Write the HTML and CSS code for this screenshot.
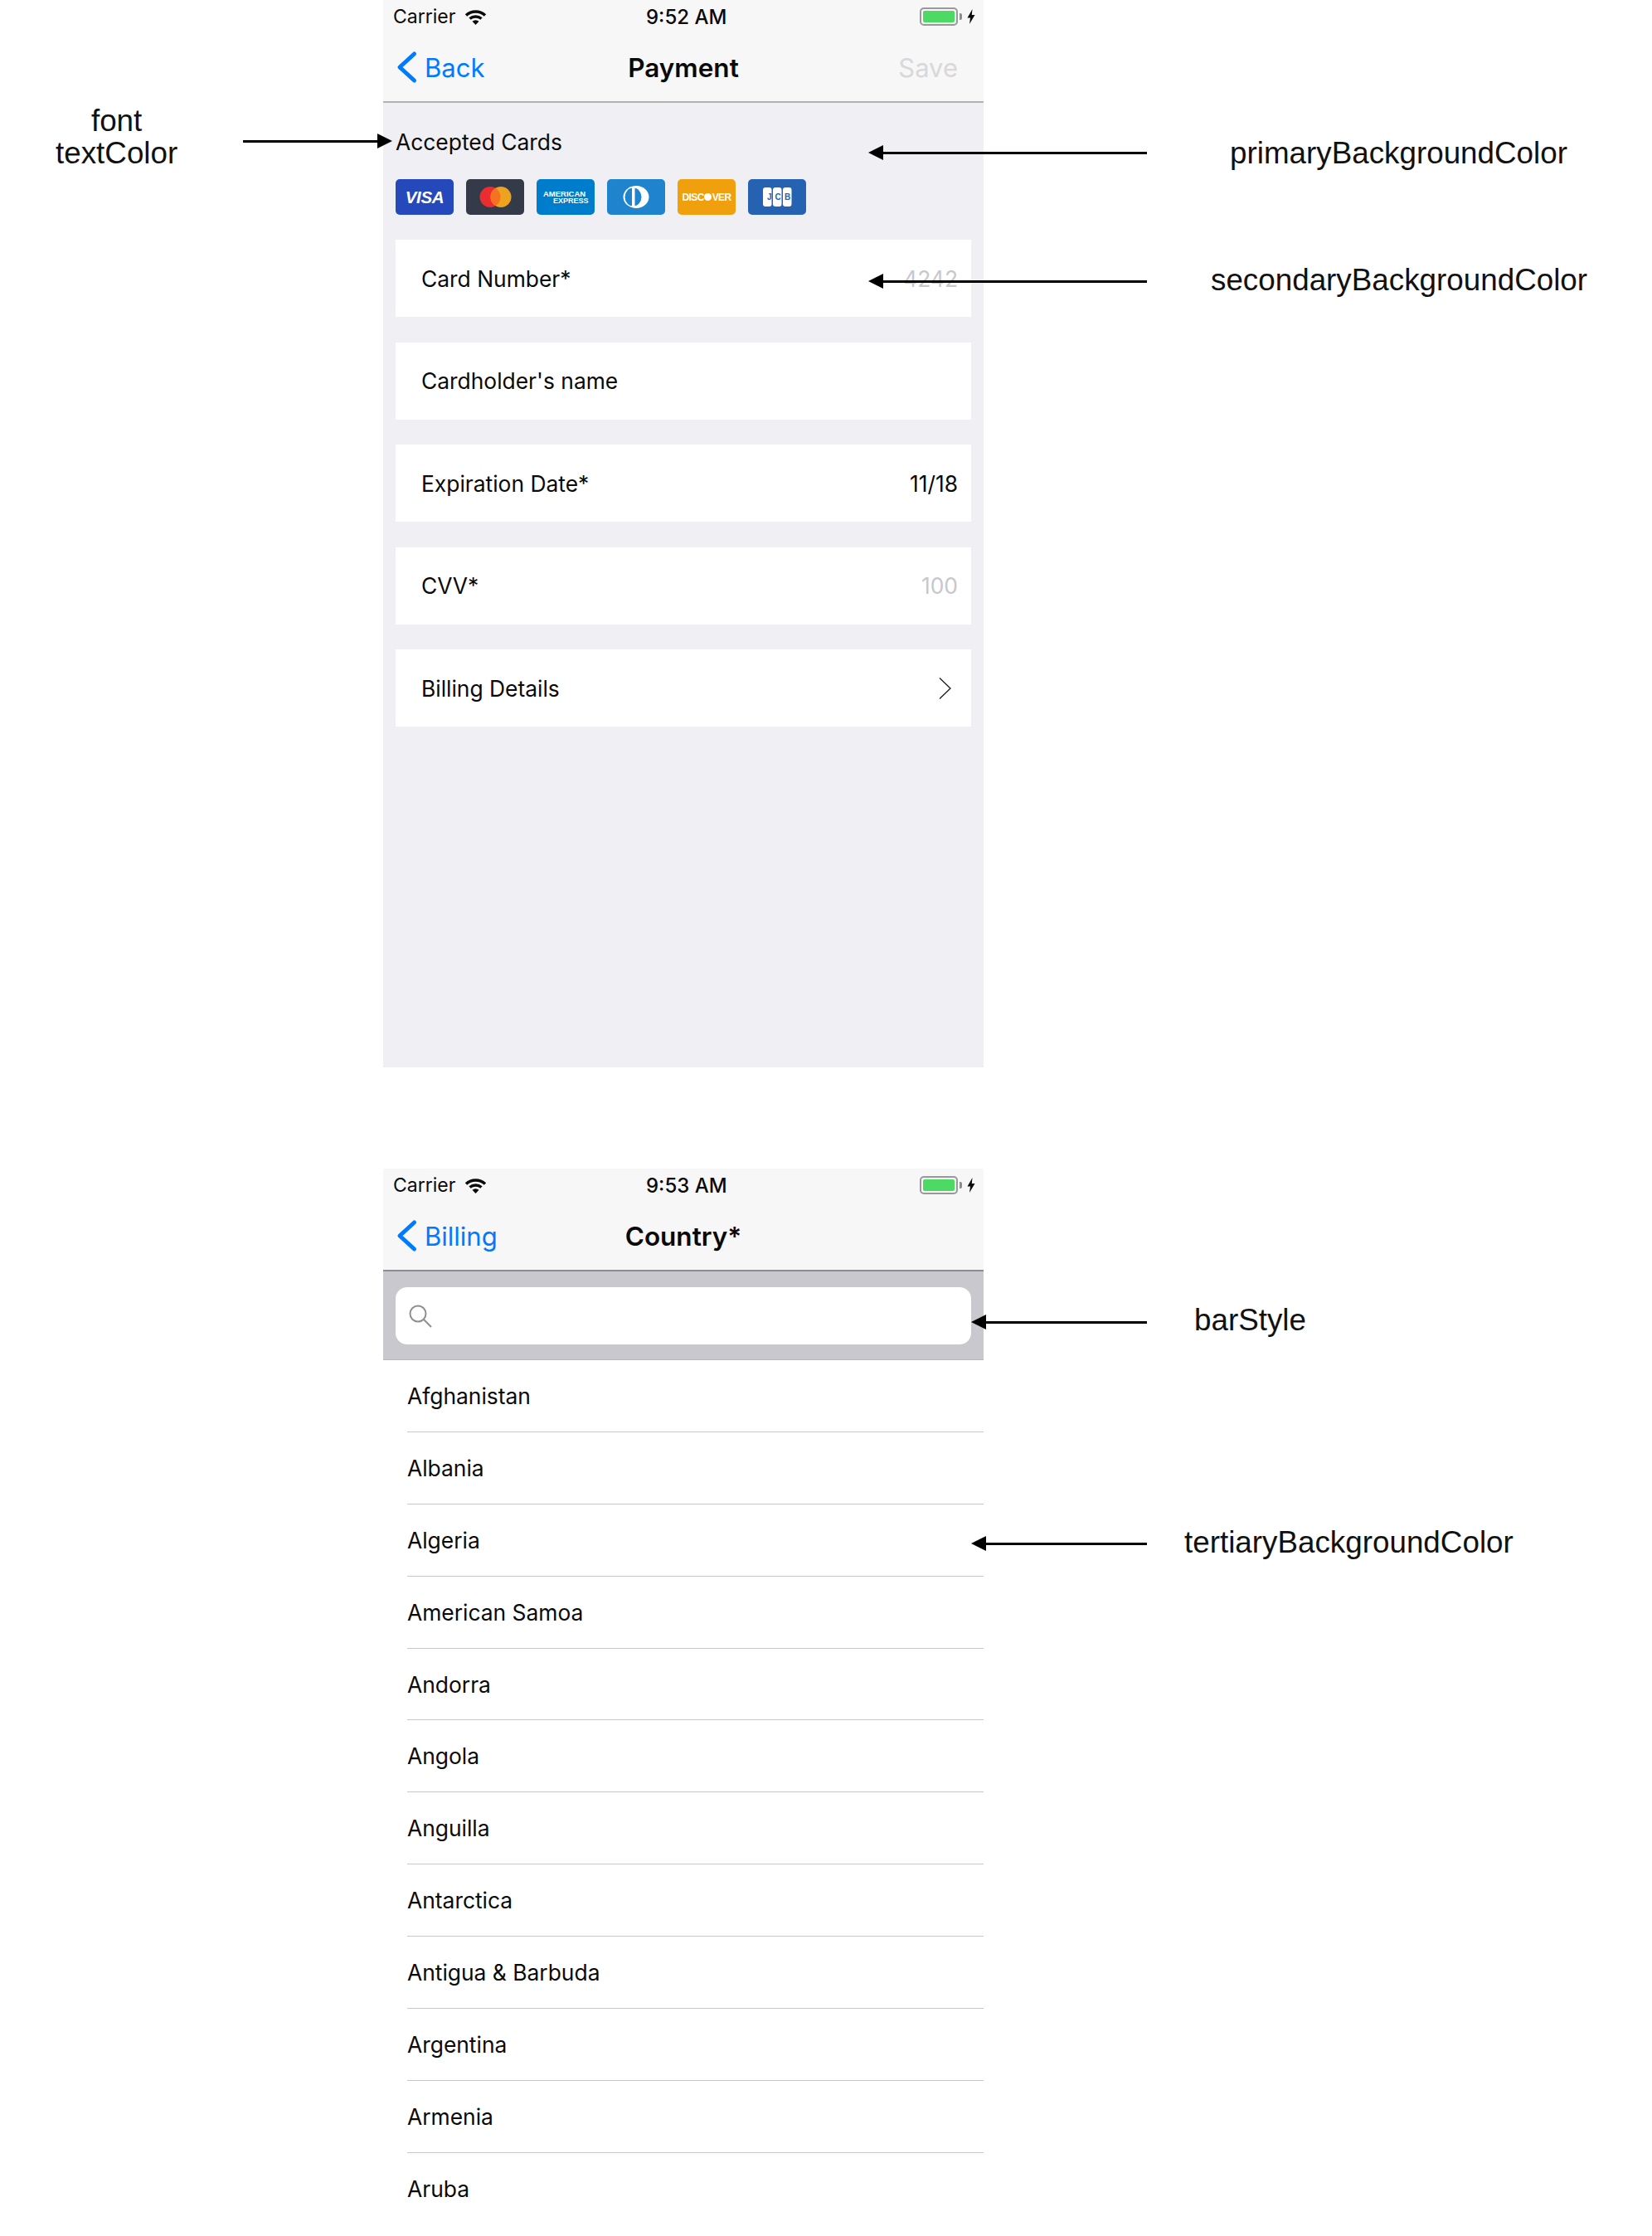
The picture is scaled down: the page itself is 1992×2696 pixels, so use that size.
FILE: index.html
```html
<!DOCTYPE html>
<html lang="en">
<head>
    <meta charset="UTF-8">
    <meta name="viewport" content="width=device-width, initial-scale=1.0">
    <title>Theme settings</title>
    <link rel="stylesheet" href="styles.css">
</head>
<body>
    <div class="page">
        <section class="phone phone-payment">
            <div class="status-bar">
                <div class="status-left">
                    <span>Carrier</span>
                    <svg class="wifi" viewBox="0 0 27 19"><path d="M2 7.500A17 17 0 0 1 25 7.500"/><path d="M6.500 11.500A11 11 0 0 1 20.500 11.500"/><path class="wifi-dot" d="M13.500 19L9.500 14.800A6 6 0 0 1 17.500 14.800Z"/></svg>
                </div>
                <span class="status-time">9:52 AM</span>
                <div class="status-right">
                    <div class="battery"><div class="battery-fill"></div></div>
                    <div class="battery-tip"></div>
                    <svg class="bolt" viewBox="0 0 10 18"><path d="M6.500 0L0.500 10.500H4L3 18L9.500 7H5.800Z"/></svg>
                </div>
            </div>
            <div class="nav-bar">
                <div class="nav-back">
                    <svg class="back-chevron" viewBox="0 0 26 42"><path d="M21.500 5L4 21L21.500 37"/></svg>
                    <span>Back</span>
                </div>
                <span class="nav-title">Payment</span>
                <span class="nav-action">Save</span>
            </div>
            <div class="payment-body">
                <div class="accepted-label">Accepted Cards</div>
                <div class="card-row">
                    <div class="card card-visa"><span>VISA</span></div>
                    <div class="card card-master">
                        <svg viewBox="0 0 70 43"><circle cx="29" cy="21.500" r="12.500" fill="#eb2d30"/><circle cx="42" cy="21.500" r="12.500" fill="#eca420"/><path d="M35.500 10.820a12.500 12.500 0 0 1 0 21.360a12.500 12.500 0 0 1 0-21.360Z" fill="#f57320"/></svg>
                    </div>
                    <div class="card card-amex"><span class="amex-top">AMERICAN</span><span class="amex-bottom">EXPRESS</span></div>
                    <div class="card card-diners">
                        <svg viewBox="0 0 70 43"><ellipse cx="35" cy="21.500" rx="15.500" ry="13.500" fill="#fff"/><ellipse cx="31.500" cy="21.500" rx="10" ry="11" fill="#2083cd"/><rect x="30" y="10" width="3.500" height="23" fill="#fff"/></svg>
                    </div>
                    <div class="card card-discover"><span>DISC<i class="discover-dot"></i>VER</span></div>
                    <div class="card card-jcb">
                        <svg viewBox="0 0 70 43"><rect x="18" y="10" width="10.500" height="23" rx="3" fill="#fff"/><rect x="30" y="10" width="10.500" height="23" rx="3" fill="#fff"/><rect x="42" y="10" width="10.500" height="23" rx="3" fill="#fff"/><text class="jcb-letters" x="23" y="25">J</text><text class="jcb-letters" x="32.500" y="25">C</text><text class="jcb-letters" x="44" y="25">B</text></svg>
                    </div>
                </div>
                <div class="form-list">
                    <div class="form-row"><span>Card Number*</span><span class="form-placeholder">4242</span></div>
                    <div class="form-row"><span>Cardholder's name</span></div>
                    <div class="form-row"><span>Expiration Date*</span><span>11/18</span></div>
                    <div class="form-row"><span>CVV*</span><span class="form-placeholder">100</span></div>
                    <div class="form-row"><span>Billing Details</span><svg class="disclosure" viewBox="0 0 15 26"><path d="M1 0.500L14 13L1 25.500"/></svg></div>
                </div>
            </div>
        </section>

        <section class="phone phone-country">
            <div class="status-bar">
                <div class="status-left">
                    <span>Carrier</span>
                    <svg class="wifi" viewBox="0 0 27 19"><path d="M2 7.500A17 17 0 0 1 25 7.500"/><path d="M6.500 11.500A11 11 0 0 1 20.500 11.500"/><path class="wifi-dot" d="M13.500 19L9.500 14.800A6 6 0 0 1 17.500 14.800Z"/></svg>
                </div>
                <span class="status-time">9:53 AM</span>
                <div class="status-right">
                    <div class="battery"><div class="battery-fill"></div></div>
                    <div class="battery-tip"></div>
                    <svg class="bolt" viewBox="0 0 10 18"><path d="M6.500 0L0.500 10.500H4L3 18L9.500 7H5.800Z"/></svg>
                </div>
            </div>
            <div class="nav-bar">
                <div class="nav-back">
                    <svg class="back-chevron" viewBox="0 0 26 42"><path d="M21.500 5L4 21L21.500 37"/></svg>
                    <span>Billing</span>
                </div>
                <span class="nav-title">Country*</span>
            </div>
            <div class="search-bar">
                <div class="search-field">
                    <svg class="search-icon" viewBox="0 0 28 28"><circle cx="11" cy="11" r="9.500"/><path d="M17.500 17.500L27 27"/></svg>
                </div>
            </div>
            <ul class="country-list">
                <li>Afghanistan</li>
                <li>Albania</li>
                <li>Algeria</li>
                <li>American Samoa</li>
                <li>Andorra</li>
                <li>Angola</li>
                <li>Anguilla</li>
                <li>Antarctica</li>
                <li>Antigua &amp; Barbuda</li>
                <li>Argentina</li>
                <li>Armenia</li>
                <li>Aruba</li>
            </ul>
        </section>

        <!-- annotations on top of the screens -->
        <div class="note note-font">font<br>textColor</div>
        <div class="arrow arrow-right arrow-font"></div>
        <div class="arrow arrow-primary"></div>
        <div class="note note-primary">primaryBackgroundColor</div>
        <div class="arrow arrow-secondary"></div>
        <div class="note note-secondary">secondaryBackgroundColor</div>
        <div class="arrow arrow-bar"></div>
        <div class="note note-bar">barStyle</div>
        <div class="arrow arrow-tertiary"></div>
        <div class="note note-tertiary">tertiaryBackgroundColor</div>
    </div>
</body>
</html>
```

FILE: styles.css
```css
html, body {
    margin: 0;
    padding: 0;
    background: white;
}
body {
    font-family: Inter, "Liberation Sans", sans-serif;
    color: #0a0a0a;
}
.page {
    position: relative;
    width: 1992px;
    height: 2696px;
    overflow: hidden;
}
.phone {
    width: 724px;
    margin-left: 462px;
    overflow: hidden;
}
.phone-payment {
    height: 1287px;
    background: #efeff4;
}
.phone-country {
    height: 1287px;
    margin-top: 122px;
    background: white;
}
.status-bar {
    height: 40px;
    padding: 0 10px 0 12px;
    display: flex;
    align-items: center;
    justify-content: space-between;
    background: #f7f7f8;
    font-size: 23px;
    position: relative;
}
.status-left {
    display: flex;
    align-items: center;
    gap: 11px;
}
.status-time {
    position: absolute;
    left: 317px;
    font-size: 24px;
    font-weight: 500;
}
.status-right {
    display: flex;
    align-items: center;
}
.wifi {
    width: 27px;
    height: 19px;
    fill: none;
    stroke: #0a0a0a;
    stroke-width: 3.500;
}
.wifi-dot {
    fill: #0a0a0a;
    stroke: none;
}
.battery {
    width: 46px;
    height: 22px;
    box-sizing: border-box;
    padding: 2px;
    border: 2px solid #999;
    border-radius: 5px;
}
.battery-fill {
    height: 100%;
    background: #4cd964;
    border-radius: 2px;
}
.battery-tip {
    width: 3px;
    height: 8px;
    margin-left: 2px;
    background: #8c8c8c;
    border-radius: 0 2px 2px 0;
}
.bolt {
    width: 10px;
    height: 18px;
    margin-left: 6px;
    fill: #0a0a0a;
}
.nav-bar {
    height: 82px;
    border-bottom: 2px solid #b2b2b2;
    background: #f7f7f8;
    position: relative;
    display: flex;
    align-items: center;
    justify-content: space-between;
    padding: 0 31px 0 16px;
    font-size: 31px;
}
.phone-country .nav-bar {
    border-bottom-color: #8e8e90;
}
.nav-back {
    display: flex;
    align-items: center;
    gap: 8px;
    color: #007aff;
}
.back-chevron {
    width: 26px;
    height: 42px;
    fill: none;
    stroke: #007aff;
    stroke-width: 5;
    stroke-linecap: round;
    stroke-linejoin: round;
}
.nav-title {
    position: absolute;
    left: 0;
    right: 0;
    text-align: center;
    font-weight: 600;
    font-size: 31.500px;
}
.nav-action {
    color: #d8d8d8;
}
.payment-body {
    padding: 28px 15px 0;
}
.accepted-label {
    font-size: 26.400px;
    line-height: 38px;
}
.card-row {
    display: flex;
    gap: 15px;
    margin-top: 26px;
}
.card {
    width: 70px;
    height: 43px;
    border-radius: 5px;
    display: flex;
    flex-direction: column;
    align-items: center;
    justify-content: center;
    color: white;
    font-family: "Liberation Sans", sans-serif;
    font-weight: 700;
}
.card svg {
    width: 70px;
    height: 43px;
}
.card-visa {
    background: #2549bb;
    font-size: 20.500px;
    font-style: italic;
    letter-spacing: -0.300px;
}
.card-master {
    background: #353a48;
}
.card-amex {
    background: #007ccc;
    line-height: 8px;
    align-items: flex-start;
}
.amex-top {
    margin-left: 8px;
    font-size: 9.500px;
}
.amex-bottom {
    margin-left: 20px;
    font-size: 9px;
}
.card-diners {
    background: #2083cd;
}
.card-discover {
    background: #f1a00d;
    font-size: 12px;
    letter-spacing: -0.600px;
}
.discover-dot {
    display: inline-block;
    width: 9px;
    height: 9px;
    border-radius: 50%;
    background: white;
    margin: 0 0.500px;
}
.card-jcb {
    background: #2563b2;
}
.jcb-letters {
    font-size: 10px;
    fill: #2563b2;
}
.form-list {
    margin-top: 30px;
    display: flex;
    flex-direction: column;
    gap: 30.500px;
}
.form-row {
    height: 93px;
    padding: 0 16px 0 31px;
    background: white;
    display: flex;
    align-items: center;
    justify-content: space-between;
    font-size: 26.400px;
}
.form-placeholder {
    color: #c7c7cd;
}
.disclosure {
    width: 15px;
    height: 26px;
    margin-right: 8px;
    fill: none;
    stroke: #1a1a1a;
    stroke-width: 1.300;
}
.search-bar {
    height: 107px;
    box-sizing: border-box;
    padding: 19px 15px 0;
    background: #c8c8ce;
    border-bottom: 1px solid #b8b8bc;
}
.search-field {
    height: 69px;
    background: white;
    border-radius: 14px;
    display: flex;
    align-items: center;
    padding-left: 16px;
}
.search-icon {
    width: 28px;
    height: 28px;
    fill: none;
    stroke: #8e8e93;
    stroke-width: 2;
}
.country-list {
    list-style: none;
    margin: 0;
    padding: 0 0 0 29px;
    font-size: 26.400px;
}
.country-list li {
    height: 85.900px;
    line-height: 87px;
    border-bottom: 1px solid #c8c7cc;
}
.country-list li:last-child {
    border-bottom: none;
}
.note {
    position: absolute;
    font-family: "Liberation Sans", sans-serif;
    font-size: 36.800px;
    line-height: 39px;
    text-align: center;
    white-space: nowrap;
    color: #111;
}
.note-font {
    left: 67px;
    top: 126px;
}
.note-primary {
    left: 1483px;
    top: 165px;
}
.note-secondary {
    left: 1460px;
    top: 318px;
}
.note-bar {
    left: 1440px;
    top: 1572px;
}
.note-tertiary {
    left: 1428px;
    top: 1840px;
}
.arrow {
    position: absolute;
    height: 3px;
    background: black;
}
.arrow::before {
    content: "";
    position: absolute;
    top: -8px;
    left: -18px;
    border-style: solid;
    border-width: 9.500px 18px 9.500px 0;
    border-color: transparent black transparent transparent;
}
.arrow-right::before {
    left: auto;
    right: -18px;
    border-width: 9.500px 0 9.500px 18px;
    border-color: transparent transparent transparent black;
}
.arrow-font {
    left: 293px;
    top: 169px;
    width: 162px;
}
.arrow-primary {
    left: 1065px;
    top: 183px;
    width: 318px;
}
.arrow-secondary {
    left: 1065px;
    top: 338px;
    width: 318px;
}
.arrow-bar {
    left: 1189px;
    top: 1593px;
    width: 194px;
}
.arrow-tertiary {
    left: 1189px;
    top: 1860px;
    width: 194px;
}
```
